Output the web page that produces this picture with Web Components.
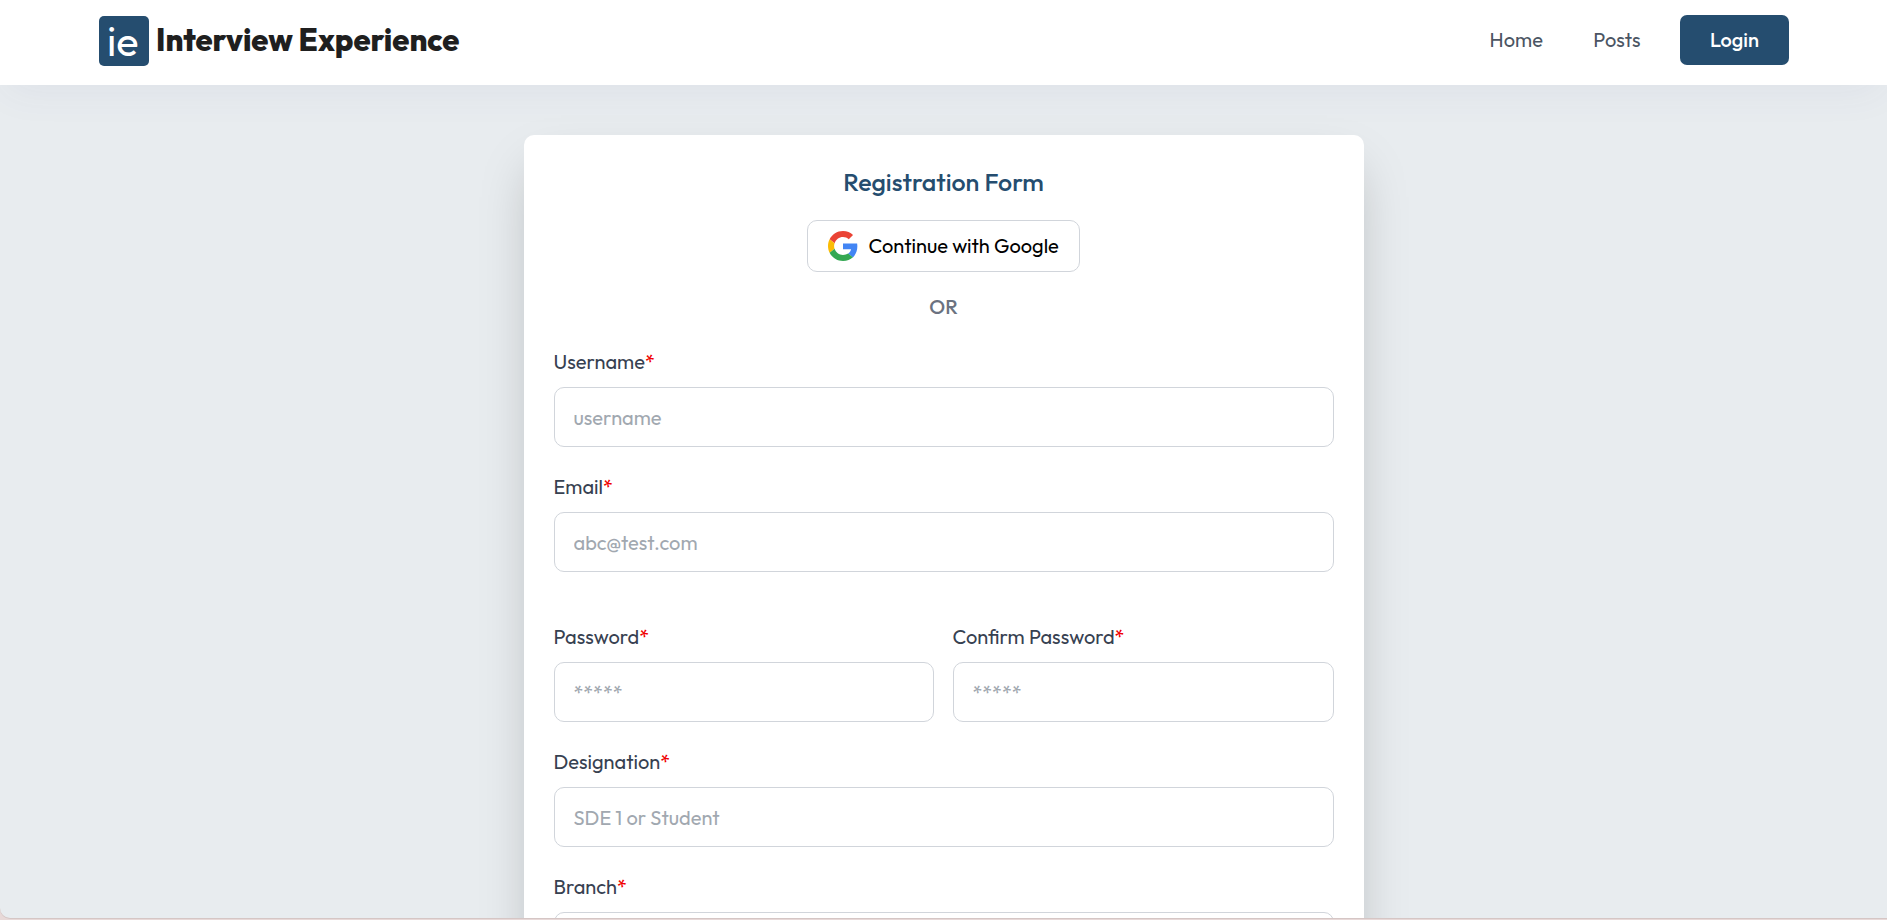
<!DOCTYPE html>
<html lang="en">
<head>
<meta charset="utf-8">
<title>Interview Experience</title>
<style>
html,body{margin:0;height:100%}
body{font:400 20px/30px Outfit,Lato,sans-serif;background:#e8ecef;overflow:hidden}
</style>
</head>
<body>
<ie-page>
  <ie-header slot="header"></ie-header>
  <ie-card>
    <ie-field label="Username" hint="username"></ie-field>
    <ie-field label="Email" hint="abc@test.com"></ie-field>
    <ie-row>
      <ie-field label="Password" hint="*****"></ie-field>
      <ie-field label="Confirm Password" hint="*****"></ie-field>
    </ie-row>
    <ie-field label="Designation" hint="SDE 1 or Student"></ie-field>
    <ie-field label="Branch" hint=""></ie-field>
  </ie-card>
</ie-page>
<script>
function define(name, html, init) {
  customElements.define(name, class extends HTMLElement {
    connectedCallback() {
      if (this.shadowRoot) return;
      const root = this.attachShadow({ mode: 'open' });
      root.innerHTML = html;
      if (init) init.call(this, root);
    }
  });
}

define('ie-logo', `<style>
:host{display:flex;align-items:center;gap:7px;color:#1f1f1f;white-space:nowrap;padding-top:1px}
.mark{width:50px;height:50px;border-radius:5px;background:#254d6f;color:#fff;box-sizing:border-box;padding-left:8px;font-size:41.5px;line-height:50px}
.name{font-weight:800;font-size:30.8px;line-height:48px;padding-bottom:2px}
</style><div class="mark">ie</div><div class="name">Interview Experience</div>`);

define('ie-header', `<style>
:host{display:flex;box-sizing:border-box;height:85px;padding:15px 98px 20px 99px;align-items:center;justify-content:space-between;background:#fff;box-shadow:0 12px 40px -5px rgba(60,60,130,.06);position:relative}
nav{display:flex;align-items:center;color:#4b5563}
.posts{margin:0 39.5px 0 50.5px}
button{all:unset;box-sizing:border-box;width:109px;height:50px;text-align:center;border-radius:7px;background:#254d6f;color:#fff;font-weight:500}
</style><ie-logo></ie-logo><nav><span>Home</span><span class="posts">Posts</span><button>Login</button></nav>`);

define('ie-google', `<style>
:host{display:flex;box-sizing:border-box;width:273px;height:52px;padding:0 20px;align-items:center;gap:10.6px;border:1px solid #d1d5db;border-radius:10px;color:#000;white-space:nowrap}
svg{width:30px;height:30px;flex:none}
</style><svg viewBox="0 0 48 48"><path fill="#ea4335" d="M24 9.5c3.54 0 6.71 1.22 9.21 3.6l6.85-6.85C35.9 2.38 30.47 0 24 0 14.62 0 6.51 5.38 2.56 13.22l7.98 6.19C12.43 13.72 17.74 9.5 24 9.5z"/><path fill="#4285f4" d="M46.98 24.55c0-1.57-.15-3.09-.38-4.55H24v9.02h12.94c-.58 2.96-2.26 5.48-4.78 7.18l7.73 6c4.51-4.18 7.09-10.36 7.09-17.65z"/><path fill="#fbbc05" d="M10.53 28.59c-.48-1.45-.76-2.99-.76-4.59s.27-3.14.76-4.59l-7.98-6.19C.92 16.46 0 20.12 0 24c0 3.88.92 7.54 2.56 10.78l7.97-6.19z"/><path fill="#34a853" d="M24 48c6.48 0 11.93-2.13 15.89-5.81l-7.73-6c-2.15 1.45-4.92 2.3-8.16 2.3-6.26 0-11.57-4.22-13.47-9.91l-7.98 6.19C6.51 42.62 14.62 48 24 48z"/></svg><span>Continue with Google</span>`);

define('ie-card', `<style>
:host{display:flex;flex-direction:column;box-sizing:border-box;width:840px;height:900px;padding:30px;margin:50px auto 0;background:#fff;border-radius:10px;box-shadow:0 25px 50px -12px rgba(0,0,0,.25);align-items:center}
.title{font-size:25px;font-weight:500;line-height:35px;color:#254d6f;margin-bottom:20px}
.or{color:#6b7280;margin:20px 0 25px;font-weight:500}
.fields{display:flex;flex-direction:column;gap:25px;width:100%}
</style><div class="title">Registration Form</div><ie-google></ie-google><div class="or">OR</div><div class="fields"><slot></slot></div>`);

define('ie-row', `<style>:host{display:grid;grid-template-columns:380px 381px;gap:19px;padding-top:25px}</style><slot></slot>`);

define('ie-field', `<style>
:host{display:flex;flex-direction:column;gap:10px;min-width:0}
label{display:flex;color:#374151}
b{font-weight:400;color:#f00000}
input{box-sizing:border-box;width:100%;height:60px;padding:0 19px;border:1px solid #d1d5db;border-radius:10px;background:#fff;font:400 20px Outfit,Lato,sans-serif;outline:0}
input::placeholder{color:#a1a8b0;opacity:1}
</style><label><span></span><b>*</b></label><input>`, function (root) {
  root.querySelector('span').textContent = this.getAttribute('label');
  root.querySelector('input').placeholder = this.getAttribute('hint');
});

define('ie-page', `<style>
:host{display:block;position:relative;height:100vh;overflow:hidden;background:#e8d9d8}
main{height:918px;overflow:hidden;background:#e8ecef;border-bottom-left-radius:10px;box-shadow:0 1px 0 #d5c6c5}
</style><main><slot name="header"></slot><slot></slot></main>`);
</script>
</body>
</html>
